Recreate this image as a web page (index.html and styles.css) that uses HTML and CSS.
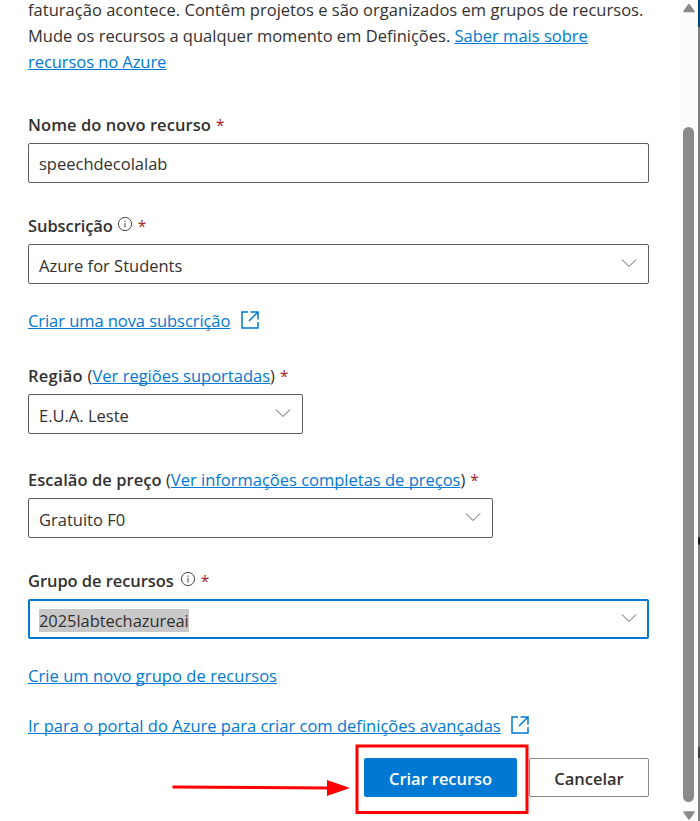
FILE: index.html
```html
<!DOCTYPE html>
<html lang="pt">
<head>
<meta charset="utf-8">
<title>Criar recurso</title>
<link rel="stylesheet" href="styles.css">
</head>
<body>
<svg class="defs" width="0" height="0">
  <symbol id="chevron" viewBox="0 0 16 10"><path d="M1 1.5 8 8.5 15 1.5"/></symbol>
  <symbol id="info" viewBox="0 0 16 16"><circle cx="8" cy="8" r="6.6"/><path d="M8 7v4.5M8 4.6v1.3"/></symbol>
  <symbol id="external" viewBox="0 0 18 18"><path d="M7 1H1v16h16v-6M9.5 1H17v7.500M17 1 8 10"/></symbol>
</svg>
<div class="window">
  <main class="panel">
    <p class="intro"><span class="i1">faturação acontece. Contêm projetos e são organizados em grupos de recursos.</span><br><span class="i2">Mude os recursos a qualquer momento em Definições. <a href="#">Saber mais sobre</a></span><br><a href="#" class="i3">recursos no Azure</a></p>

    <div class="field name">
      <div class="label"><b class="l1">Nome do novo recurso</b><i class="req">*</i></div>
      <div class="box"><span class="v1">speechdecolalab</span></div>
    </div>

    <div class="field subscription">
      <div class="label"><b class="l2">Subscrição</b><svg class="info"><use href="#info"/></svg><i class="req">*</i></div>
      <div class="box"><span class="v2">Azure for Students</span><svg class="chevron"><use href="#chevron"/></svg></div>
    </div>
    <div class="link-row"><a href="#" class="k1">Criar uma nova subscrição</a><svg class="external"><use href="#external"/></svg></div>

    <div class="field region">
      <div class="label"><b class="l3">Região <span class="paren">(</span></b><a href="#" class="k2">Ver regiões suportadas</a><b class="paren">)</b><i class="req">*</i></div>
      <div class="box"><span class="v3">E.U.A. Leste</span><svg class="chevron"><use href="#chevron"/></svg></div>
    </div>

    <div class="field tier">
      <div class="label"><b class="l4">Escalão de preço <span class="paren">(</span></b><a href="#" class="k3">Ver informações completas de preços</a><b class="paren">)</b><i class="req">*</i></div>
      <div class="box"><span class="v4">Gratuito F0</span><svg class="chevron"><use href="#chevron"/></svg></div>
    </div>

    <div class="field group">
      <div class="label"><b class="l5">Grupo de recursos</b><svg class="info"><use href="#info"/></svg><i class="req">*</i></div>
      <div class="box focused"><span class="selected v5">2025labtechazureai</span><svg class="chevron"><use href="#chevron"/></svg></div>
    </div>
    <div class="link-row"><a href="#" class="k4">Crie um novo grupo de recursos</a></div>
    <div class="link-row"><a href="#" class="k5">Ir para o portal do Azure para criar com definições avançadas</a><svg class="external"><use href="#external"/></svg></div>

    <div class="actions">
      <button class="primary"><span class="b1">Criar recurso</span></button>
      <button class="secondary"><span class="b2">Cancelar</span></button>
    </div>
  </main>
  <div class="scrollbar">
    <svg class="up" width="12" height="9" viewBox="0 0 12 9"><path d="M6 1 11 8H1Z"/></svg>
    <div class="thumb"></div>
    <svg class="down" width="12" height="9" viewBox="0 0 12 9"><path d="M6 8 11 1H1Z"/></svg>
  </div>
  <div class="backdrop"><div class="header-edge"></div><div class="dot"></div><div class="mark"></div></div>
  <svg class="annotation" width="700" height="821" viewBox="0 0 700 821">
    <rect x="357" y="746" width="170" height="66.500"/>
    <path class="shaft" d="M172.500 787 330 788"/>
    <path class="head" d="M327 780 350 788 327 796Z"/>
  </svg>
</div>
</body>
</html>
```
FILE: styles.css
```css
* { box-sizing: border-box; }
body {
  margin: 0;
  background: #fff;
  color: #323130;
  font-family: "Open Sans", "Noto Sans", sans-serif;
  font-size: 16.5px;
  line-height: 26px;
}
.defs { position: absolute; }
.window { position: relative; display: flex; width: 700px; height: 821px; overflow: hidden; }
.panel { width: 679px; padding: 0 30px 0 28px; }
a { color: #0078d4; text-decoration: underline; text-decoration-thickness: 1px; text-underline-offset: 1px; text-decoration-skip-ink: none; }
b { font-weight: 600; }
.intro { margin: -3px 0 37px; white-space: nowrap; }
.i1 { letter-spacing: 0.025px; }
.i3 { letter-spacing: -0.06px; }
.l1 { letter-spacing: 0.08px; }
.l2 { letter-spacing: -0.08px; }
.l3 { letter-spacing: 0.24px; }
.l4 { letter-spacing: 0.05px; }
.l5 { letter-spacing: -0.06px; }
.k1 { letter-spacing: -0.06px; }
.k4 { letter-spacing: 0.06px; }
.k5 { letter-spacing: 0.015px; }
.v5 { letter-spacing: -0.06px; }
.b1 { letter-spacing: -0.06px; }
.paren { font-weight: 500; }
.field { margin-bottom: 30px; }
.subscription, .group { margin-bottom: 24px; }
.region { margin: 29px 0 33px; }
.region .box { width: 275px; }
.tier .box { width: 465px; }
.label { display: flex; align-items: center; height: 26px; margin-bottom: 5px; white-space: nowrap; }
.l3, .l4 { white-space: pre; }
.req { margin-left: 5px; color: #a4262c; font-style: normal; font-size: 15.5px; }
.info { width: 16px; height: 16px; margin: -4px 0 0 4px; fill: none; stroke: #484644; stroke-width: 1; }
.group .info { margin-left: 6px; }
.info + .req { margin-left: 5px; }
.box {
  display: flex; align-items: center; justify-content: space-between;
  height: 40px; padding: 3px 11px 0 10px;
  border: 1px solid #605e5c; border-radius: 2px;
  white-space: nowrap;
}
.name .box { padding-top: 1px; }
.box.focused { border: 2px solid #0078d4; padding: 3px 10px 0 9px; }
.selected { height: 23px; line-height: 23px; background: #c8c8c8; }
.chevron { width: 16px; height: 10px; margin-top: -5px; fill: none; stroke: #605e5c; stroke-width: 1; }
.link-row { display: flex; align-items: center; height: 26px; margin-bottom: 24px; white-space: nowrap; }
.external { width: 18px; height: 18px; margin: -2px 0 0 11px; fill: none; stroke: #0078d4; stroke-width: 1.5; }
.k5 + .external { margin-left: 10px; }
.actions { display: flex; justify-content: flex-end; gap: 12px; margin: -5px 0 0; }
button { height: 39px; padding: 2px 0 0; border-radius: 2px; font: 600 16.5px/26px "Open Sans", "Noto Sans", sans-serif; white-space: nowrap; }
.primary { width: 153px; border: 0; background: #0078d4; color: #fff; }
.secondary { width: 120px; border: 1px solid #8a8886; background: #fff; color: #323130; }
.scrollbar { display: flex; flex-direction: column; align-items: center; width: 19px; height: 821px; padding: 3px 0 0; background: #fcfcfc; }
.scrollbar svg { fill: #8a8a8a; stroke: #8a8a8a; stroke-width: 1.5; stroke-linejoin: round; }
.up { height: 10px; flex: none; }
.thumb { width: 11px; height: 675px; margin: 114px 0 9px; flex: none; border-radius: 6px; background: #8a8a8a; }
.down { height: 9px; flex: none; }
.backdrop { width: 2px; height: 821px; background: #808080; }
.header-edge { height: 27px; background: #004377; }
.dot { height: 8px; margin-top: 510px; border-radius: 2px 0 0 2px; background: #111; }
.mark { height: 11px; margin-top: 202px; background: #3c3c3c; }
.annotation { position: absolute; inset: 0; fill: none; stroke: #f00; stroke-width: 3; pointer-events: none; }
.head { fill: #f00; stroke: none; }
```
